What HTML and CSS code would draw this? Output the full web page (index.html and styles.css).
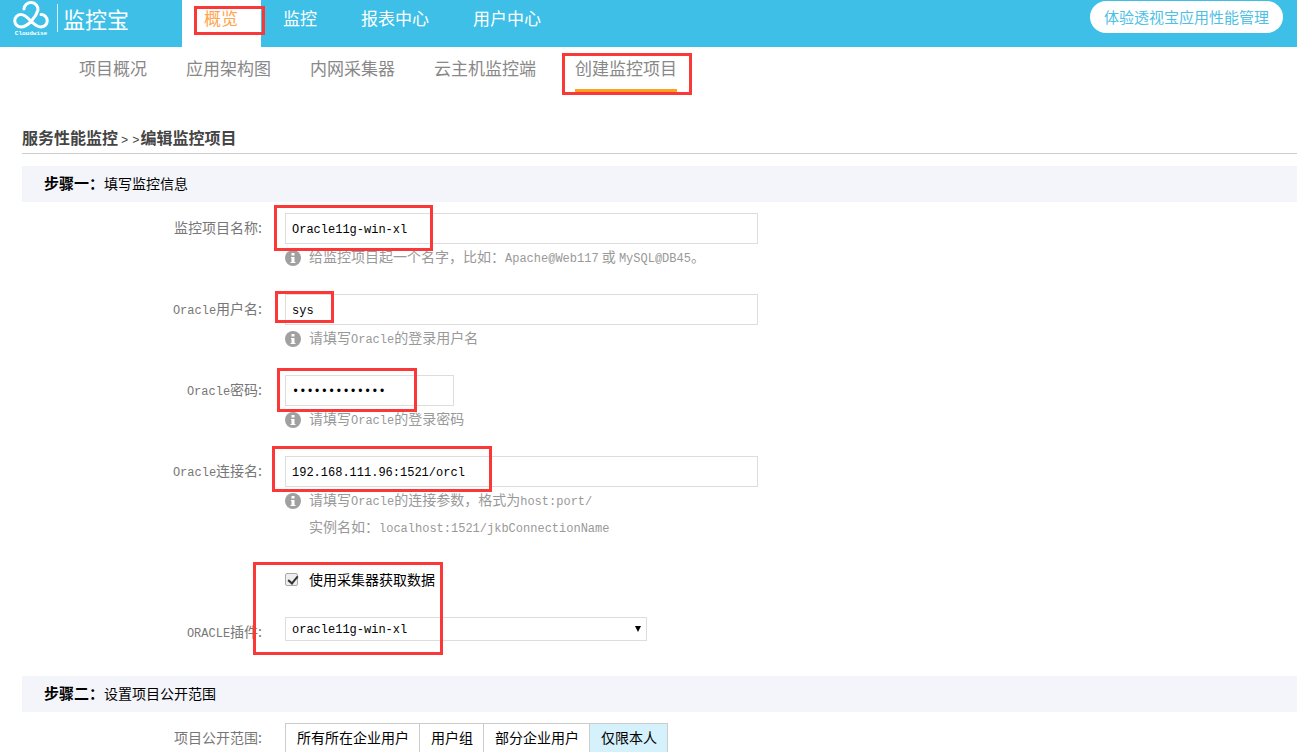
FILE: index.html
```html
<!DOCTYPE html>
<html lang="zh-CN">
<head>
<meta charset="utf-8">
<title>监控宝 - 编辑监控项目</title>
<link rel="stylesheet" href="styles.css">
</head>
<body>
<header class="topbar">
  <a class="logo" href="#">
    <span class="logo-mark">
      <svg width="38" height="30" viewBox="12 0 38 30" fill="none" stroke="#fff" stroke-width="3" stroke-linecap="round" aria-hidden="true">
        <path d="M24 9A7 7 0 1 1 38 10C36 17 28 27 21 27A6 6 0 1 1 21 14.500C28 14.500 33 27 41 27A6 6 0 1 0 41 14.500"/>
      </svg>
      <span class="logo-sub">Cloudwise</span>
    </span>
    <span class="logo-name">监控宝</span>
  </a>
  <nav class="tabs">
    <a class="tab tab-active" href="#">概览<span class="mark mark-tab"></span></a>
    <a class="tab" href="#">监控</a>
    <a class="tab" href="#">报表中心</a>
    <a class="tab" href="#">用户中心</a>
  </nav>
  <a class="promo" href="#">体验透视宝应用性能管理</a>
</header>
<nav class="subnav">
  <a class="sub" href="#">项目概况</a>
  <a class="sub" href="#">应用架构图</a>
  <a class="sub" href="#">内网采集器</a>
  <a class="sub" href="#">云主机监控端</a>
  <a class="sub sub-active" href="#">创建监控项目<span class="mark mark-sub"></span></a>
</nav>
<main class="content">
  <h1 class="crumbs">服务性能监控<span class="sep">&gt;</span><span class="sep">&gt;</span>编辑监控项目</h1>
  <h2 class="step"><strong>步骤一：</strong>填写监控信息</h2>
  <form class="form">
    <div class="row">
      <label class="label" for="name">监控项目名称:</label>
      <div class="field">
        <input class="text" id="name" type="text" value="Oracle11g-win-xl">
        <p class="hint"><svg class="info" viewBox="0 0 16 16" aria-hidden="true"><circle cx="8" cy="8" r="8" fill="#a0a0a0"/><path d="M6.500 3h3v2.500h-3zM6 7h3.500v5h1v1h-5v-1h1v-4h-.5z" fill="#fff"/></svg><span>给监控项目起一个名字，比如：<span class="latin">Apache@Web117</span> 或 <span class="latin">MySQL@DB45</span>。</span></p>
        <span class="mark mark-name"></span>
      </div>
    </div>
    <div class="row">
      <label class="label" for="user"><span class="latin">Oracle</span>用户名:</label>
      <div class="field">
        <input class="text" id="user" type="text" value="sys">
        <p class="hint"><svg class="info" viewBox="0 0 16 16" aria-hidden="true"><circle cx="8" cy="8" r="8" fill="#a0a0a0"/><path d="M6.500 3h3v2.500h-3zM6 7h3.500v5h1v1h-5v-1h1v-4h-.5z" fill="#fff"/></svg><span>请填写<span class="latin">Oracle</span>的登录用户名</span></p>
        <span class="mark mark-user"></span>
      </div>
    </div>
    <div class="row">
      <label class="label" for="pass"><span class="latin">Oracle</span>密码:</label>
      <div class="field">
        <input class="text text-short" id="pass" type="password" value="abcdefghijklm">
        <p class="hint"><svg class="info" viewBox="0 0 16 16" aria-hidden="true"><circle cx="8" cy="8" r="8" fill="#a0a0a0"/><path d="M6.500 3h3v2.500h-3zM6 7h3.500v5h1v1h-5v-1h1v-4h-.5z" fill="#fff"/></svg><span>请填写<span class="latin">Oracle</span>的登录密码</span></p>
        <span class="mark mark-pass"></span>
      </div>
    </div>
    <div class="row">
      <label class="label" for="conn"><span class="latin">Oracle</span>连接名:</label>
      <div class="field">
        <input class="text" id="conn" type="text" value="192.168.111.96:1521/orcl">
        <p class="hint"><svg class="info" viewBox="0 0 16 16" aria-hidden="true"><circle cx="8" cy="8" r="8" fill="#a0a0a0"/><path d="M6.500 3h3v2.500h-3zM6 7h3.500v5h1v1h-5v-1h1v-4h-.5z" fill="#fff"/></svg><span>请填写<span class="latin">Oracle</span>的连接参数，格式为<span class="latin">host:port/</span><br>实例名如：<span class="latin">localhost:1521/jkbConnectionName</span></span></p>
        <span class="mark mark-conn"></span>
      </div>
    </div>
    <div class="collector">
      <div class="row row-check">
        <label class="check"><input class="box" type="checkbox" checked>使用采集器获取数据</label>
      </div>
      <div class="row row-select">
        <label class="label" for="plugin"><span class="latin">ORACLE</span>插件:</label>
        <div class="picker">
          <select class="select" id="plugin"><option>oracle11g-win-xl</option></select>
          <svg class="arrow" viewBox="0 0 6 6" aria-hidden="true"><path d="M0 0h6L3 6z"/></svg>
        </div>
      </div>
      <span class="mark mark-collector"></span>
    </div>
  </form>
  <h2 class="step"><strong>步骤二：</strong>设置项目公开范围</h2>
  <div class="form">
    <div class="row">
      <span class="label" id="scope">项目公开范围:</span>
      <div class="options" role="group" aria-labelledby="scope">
        <button class="option" type="button">所有所在企业用户</button>
        <button class="option" type="button">用户组</button>
        <button class="option" type="button">部分企业用户</button>
        <button class="option option-on" type="button" aria-pressed="true">仅限本人</button>
      </div>
    </div>
  </div>
</main>
</body>
</html>
```
FILE: styles.css
```css
* { box-sizing: border-box; }
html { overflow: hidden; }
body {
  margin: 0;
  background: #fff;
  color: #000;
  font: 14px/20px "Noto Sans CJK SC", sans-serif;
}
a { text-decoration: none; }

.topbar {
  display: flex;
  align-items: flex-start;
  height: 47px;
  padding-right: 14px;
  background: #3dbfe8;
}
.logo {
  display: flex;
  gap: 7px;
  width: 182px;
  padding-left: 12px;
  color: #fff;
}
.logo-mark { display: flex; flex-direction: column; align-items: center; width: 38px; }
.logo-mark svg { display: block; }
.logo-sub { font: bold 6px/7px "Liberation Mono", monospace; }
.logo-name {
  height: 28px;
  margin-top: 4px;
  padding-left: 5px;
  border-left: 1px solid #d5f1fb;
  font-size: 22px;
  line-height: 28px;
}
.tabs { display: flex; }
.tab {
  position: relative;
  height: 47px;
  padding: 0 22px;
  color: #fff;
  font-size: 17px;
  line-height: 35px;
}
.tab-active { padding-right: 23px; background: #fff; color: #ffa550; }
.promo {
  margin: 1px 0 0 auto;
  padding: 0 14px;
  border-radius: 16px;
  background: #fff;
  color: #4fbfe6;
  font-size: 15px;
  line-height: 32px;
}

.subnav { display: flex; gap: 39px; padding-left: 79px; }
.sub {
  position: relative;
  height: 45px;
  color: #888;
  font-size: 17px;
  line-height: 42px;
}
.sub-active { border-bottom: 3px solid #ffa01f; }

.content { padding: 33px 0 0 22px; }
.crumbs {
  margin: 0 0 12px;
  padding-bottom: 4px;
  border-bottom: 1px solid #ccc;
  color: #444;
  font-size: 16px;
  line-height: 24px;
}
.sep { padding: 0 1px 0 3px; font: 12px "Liberation Mono", monospace; }
.step {
  margin: 0;
  padding: 0 0 2px 22px;
  background: #f4f5fa;
  font-size: 14px;
  font-weight: 400;
  line-height: 34px;
}
.step strong { font-size: 15px; }

.form { padding-top: 11px; }
.row { display: grid; grid-template-columns: 240px 1fr; column-gap: 23px; }
.label { color: #777; line-height: 28px; text-align: right; }
.latin { font: 12px "Liberation Mono", monospace; }
.field { position: relative; padding-bottom: 24px; }
.text {
  display: block;
  width: 473px;
  height: 31px;
  padding: 2px 6px 0;
  border: 1px solid #ddd;
  background: #fff;
  color: #000;
  font: 12px "Liberation Mono", monospace;
}
.text-short { width: 169px; }
.hint {
  display: flex;
  gap: 8px;
  margin: -1px 0 0;
  color: #999;
  line-height: 27px;
}
.info { flex: none; width: 16px; height: 16px; margin-top: 7px; }

.collector { position: relative; padding-bottom: 31px; }
.row-check { padding: 5px 0 28px; }
.check { display: flex; grid-column: 2; align-items: center; gap: 11px; }
.box {
  appearance: none;
  width: 13px;
  height: 13px;
  margin: 0;
  border: 1px solid #aaa;
  border-radius: 2px;
  background: #eee;
}
.box:checked::before {
  content: "";
  display: block;
  width: 4px;
  height: 8px;
  margin: 0 0 0 4px;
  border: solid #333;
  border-width: 0 2px 2px 0;
  transform: rotate(40deg);
}
.picker { display: grid; align-items: center; width: 362px; height: 24px; }
.select, .arrow { grid-area: 1 / 1; }
.select {
  appearance: none;
  width: 100%;
  height: 24px;
  padding: 2px 6px 0;
  border: 1px solid #ddd;
  border-radius: 0;
  background: #fff;
  color: #000;
  font: 12px "Liberation Mono", monospace;
}
.arrow { justify-self: end; width: 6px; height: 6px; margin-right: 6px; pointer-events: none; }

.options { display: flex; }
.option {
  height: 30px;
  margin: 0 -1px 0 0;
  padding: 0 10px 2px 11px;
  border: 1px solid #ccc;
  background: #fff;
  color: #000;
  font: 14px "Noto Sans CJK SC", sans-serif;
}
.option-on { background: #d5f1fb; }

/* Red callout frames drawn over the controls */
.mark { position: absolute; border: 3px solid #fb3838; pointer-events: none; }
.mark-tab { left: 12px; top: 6px; width: 71px; height: 29px; }
.mark-sub { left: -13px; top: 6px; width: 130px; height: 42px; }
.mark-name { left: -11px; top: -8px; width: 159px; height: 46px; }
.mark-user { left: -10px; top: -3px; width: 59px; height: 32px; }
.mark-pass { left: -8px; top: -7px; width: 140px; height: 44px; }
.mark-conn { left: -13px; top: -10px; width: 220px; height: 46px; }
.mark-collector { left: 231px; top: -2px; width: 190px; height: 93px; }
```
